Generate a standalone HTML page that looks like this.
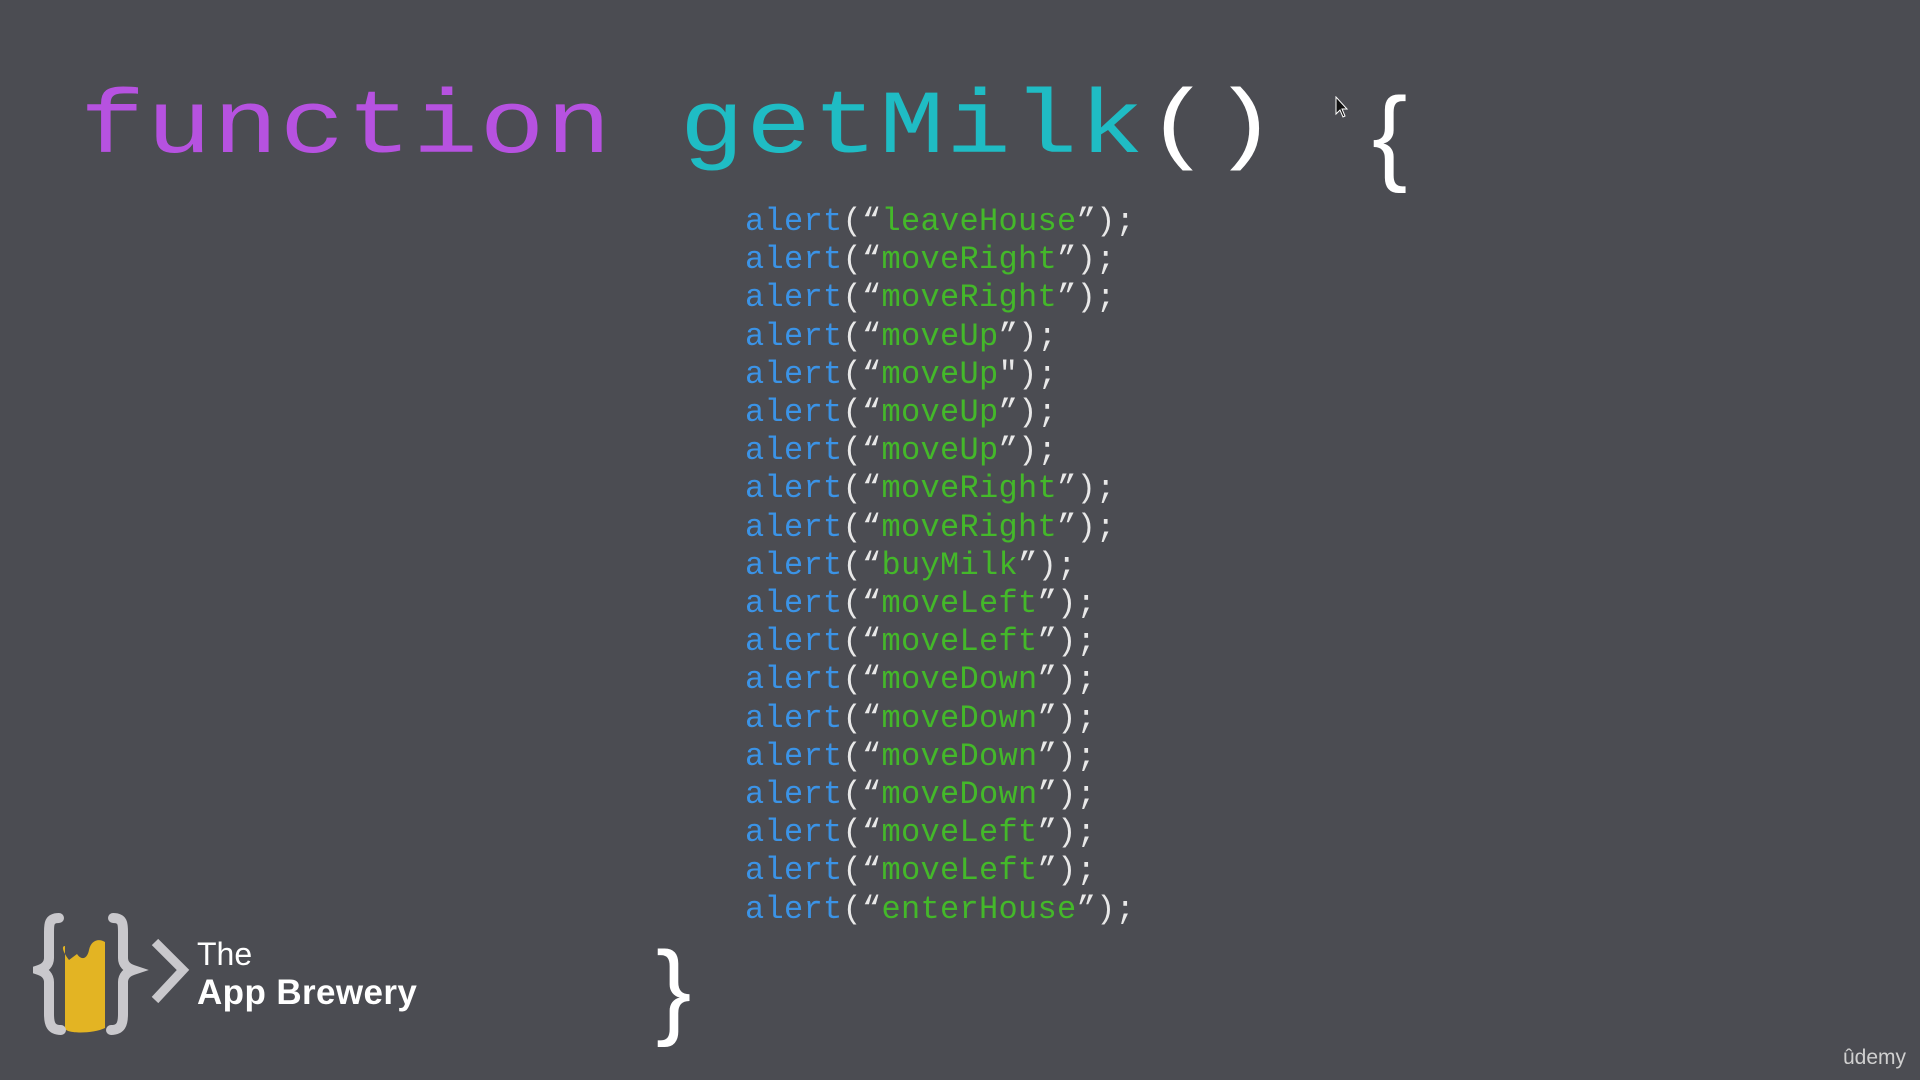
<!DOCTYPE html>
<html><head><style>
body{margin:0;width:1920px;height:1080px;background:#4b4c52;overflow:hidden;position:relative;font-family:"Liberation Mono",monospace}
.h{position:absolute;left:80px;top:59px;font-size:90px;line-height:140px;white-space:pre;letter-spacing:1.5px;transform:scaleX(1.2);transform-origin:0 0}
.k{color:#b652e0}.f{color:#1fbcc4}.w{color:#fff}
.code{position:absolute;left:745px;top:203px;font-size:32px;line-height:38.2px;white-space:pre;color:#e8e8e8;letter-spacing:0.3px}
.a{color:#3b93e6}.s{color:#44b82a}
.brace{position:absolute;color:#fff;font-family:"Liberation Sans",sans-serif}
</style></head><body>
<div class="h"><span class="k">function</span> <span class="f">getMilk</span><span class="w">()</span></div>
<div class="brace" style="left:1372px;top:70px;font-size:106px;line-height:130px">{</div>
<div class="brace" style="left:656px;top:924px;font-size:106px;line-height:130px">}</div>
<svg style="position:absolute;left:1335px;top:96px" width="16" height="24" viewBox="0 0 16 24"><path d="M1 1 L1 18 L5 14 L8 21 L10 20 L7 13 L12 13 Z" fill="#111" stroke="#fff" stroke-width="1"/></svg>
<div class="code"><span class="a">alert</span>(“<span class="s">leaveHouse</span>”);
<span class="a">alert</span>(“<span class="s">moveRight</span>”);
<span class="a">alert</span>(“<span class="s">moveRight</span>”);
<span class="a">alert</span>(“<span class="s">moveUp</span>”);
<span class="a">alert</span>(“<span class="s">moveUp</span>");
<span class="a">alert</span>(“<span class="s">moveUp</span>”);
<span class="a">alert</span>(“<span class="s">moveUp</span>”);
<span class="a">alert</span>(“<span class="s">moveRight</span>”);
<span class="a">alert</span>(“<span class="s">moveRight</span>”);
<span class="a">alert</span>(“<span class="s">buyMilk</span>”);
<span class="a">alert</span>(“<span class="s">moveLeft</span>”);
<span class="a">alert</span>(“<span class="s">moveLeft</span>”);
<span class="a">alert</span>(“<span class="s">moveDown</span>”);
<span class="a">alert</span>(“<span class="s">moveDown</span>”);
<span class="a">alert</span>(“<span class="s">moveDown</span>”);
<span class="a">alert</span>(“<span class="s">moveDown</span>”);
<span class="a">alert</span>(“<span class="s">moveLeft</span>”);
<span class="a">alert</span>(“<span class="s">moveLeft</span>”);
<span class="a">alert</span>(“<span class="s">enterHouse</span>”);</div>
<svg style="position:absolute;left:33px;top:910px" width="165" height="128" viewBox="0 0 165 128">
<path d="M36 50 C30 42 28 36 32 36 L32 118 C32 124 60 124 72 118 L72 32 C66 28 58 30 56 40 C54 50 48 50 44 44 Z" fill="#e3b423"/>
<path d="M26 8 C16 8 16 14 16 22 L16 48 C16 54 12 58 6 60 C12 62 16 66 16 72 L16 104 C16 114 18 120 28 120" fill="none" stroke="#c9c8cc" stroke-width="10" stroke-linecap="round"/>
<path d="M80 8 C90 8 90 14 90 22 L90 48 C90 54 94 58 100 60 C94 62 90 66 90 72 L90 104 C90 114 88 120 78 120" fill="none" stroke="#c9c8cc" stroke-width="10" stroke-linecap="round"/>
<path d="M122 32 L150 60 L122 90" fill="none" stroke="#c9c8cc" stroke-width="9"/>
</svg>
<div style="position:absolute;left:197px;top:934px;color:#fff;font-family:'Liberation Sans',sans-serif;font-size:32px;line-height:40px">The</div>
<div style="position:absolute;left:197px;top:972px;color:#fff;font-family:'Liberation Sans',sans-serif;font-weight:bold;font-size:35px;line-height:42px;letter-spacing:0.4px">App Brewery</div>
<div style="position:absolute;left:1843px;top:1046px;color:#d0d0d0;font-family:'Liberation Sans',sans-serif;font-size:21px">ûdemy</div>
</body></html>
